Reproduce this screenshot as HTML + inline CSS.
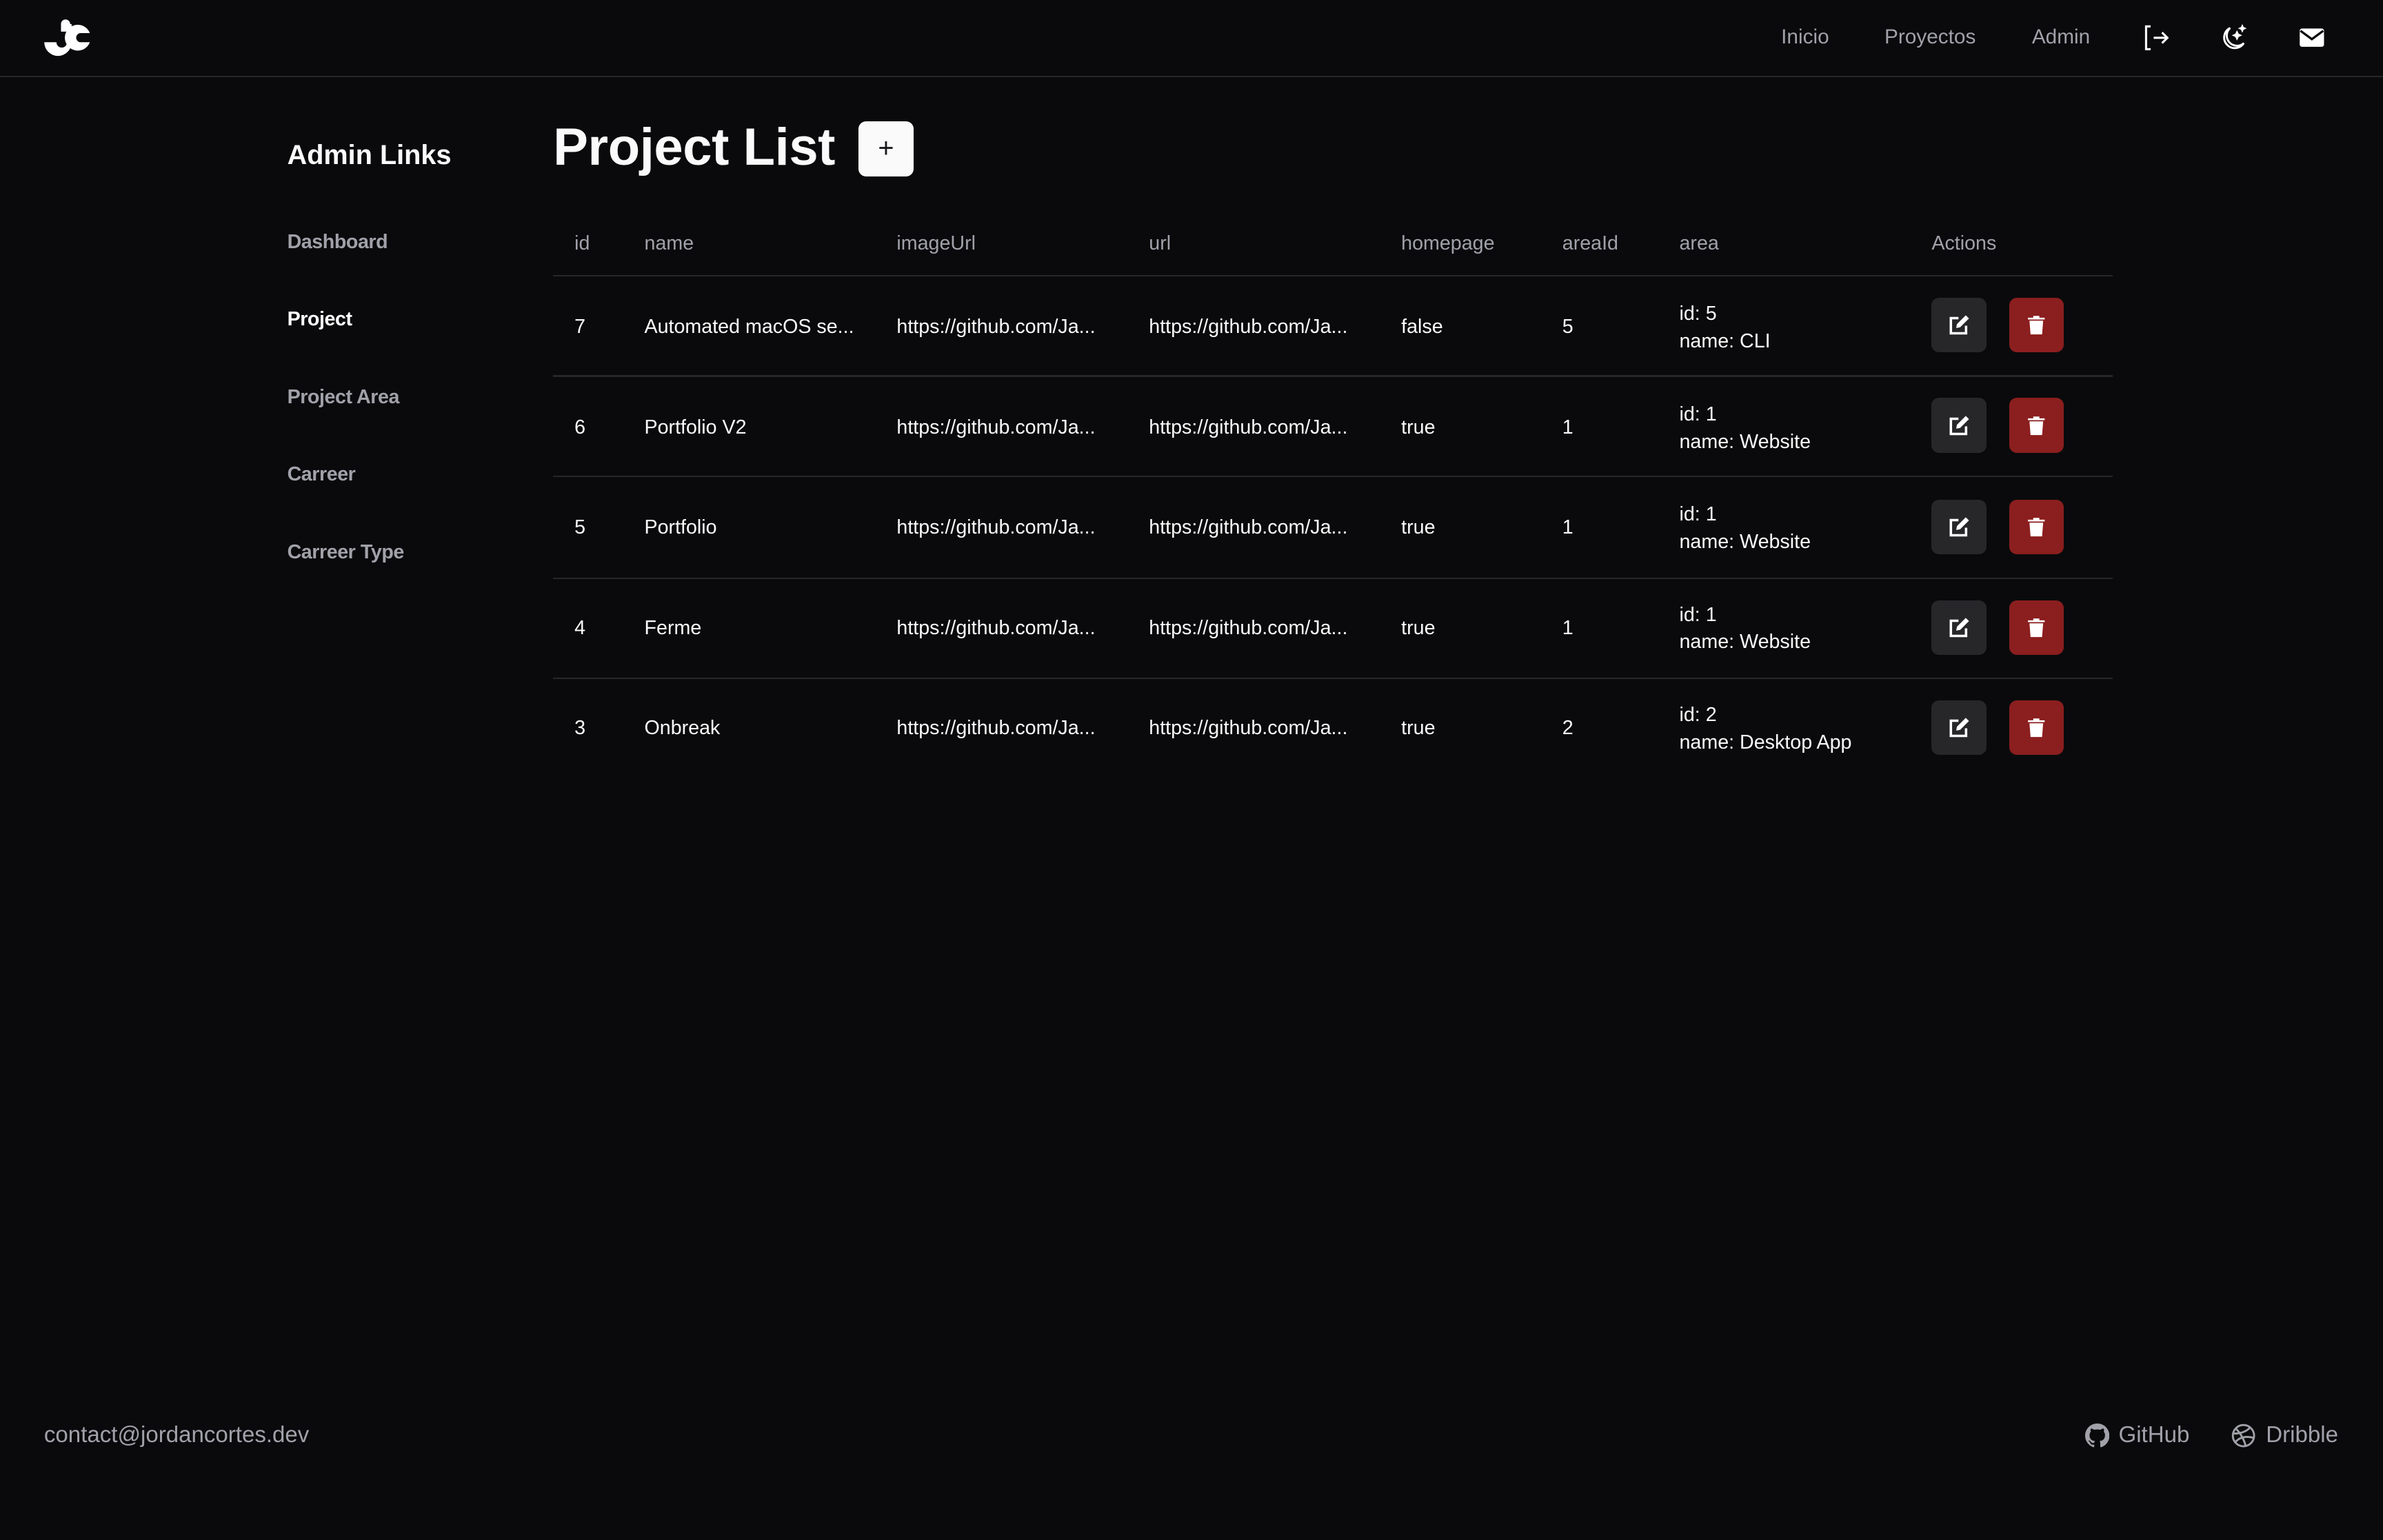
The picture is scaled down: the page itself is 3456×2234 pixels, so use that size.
<!DOCTYPE html>
<html><head><meta charset="utf-8"><style>
html{zoom:2.20408}
*{margin:0;padding:0;box-sizing:border-box}
body{width:1568px;height:1013.6px;background:#0a0a0c;font-family:"Liberation Sans",sans-serif;color:#fafafa;position:relative;overflow:hidden}
.a{position:absolute;white-space:nowrap}
.hdr{position:absolute;left:0;top:0;width:1568px;height:51px;border-bottom:1px solid #27272a}
.nav{font-size:13.5px;color:#a1a1aa;top:17px}
.side{font-size:13px;color:#a1a1aa;font-weight:bold;left:189px;letter-spacing:-0.2px}
.th{font-size:13px;color:#a1a1aa;top:153px}
.td{font-size:13px;color:#fafafa;margin-top:1px}
.line{position:absolute;left:364px;width:1026px;height:1px;background:#27272a}
.btn{position:absolute;width:36px;height:36px;border-radius:5px;display:flex;align-items:center;justify-content:center}
.ed{background:#27272a}.dl{background:#8b1e1e}
.foot{font-size:15px;color:#a1a1aa;top:936px}
</style></head><body>
<div class="hdr"></div>
<svg class="a" style="left:28px;top:12px" width="32" height="26" viewBox="0 0 32 26">
<circle cx="15" cy="4" r="3" fill="#fff"/>
<path d="M1 16 H9 A3.5 3.5 0 0 0 16 16 V9 H12 V4 H19 V16 A9 9 0 0 1 1 16Z" fill="#fff"/>
<path d="M31 10 A8.5 8.5 0 1 0 31 16 H25 A3 3 0 1 1 25 10Z" fill="#fff"/>
</svg>
<div class="a nav" style="left:1172px">Inicio</div>
<div class="a nav" style="left:1240px">Proyectos</div>
<div class="a nav" style="left:1337px">Admin</div>
<svg class="a" style="left:1410px;top:16px" width="18" height="18" viewBox="0 0 18 18" fill="none" stroke="#fff" stroke-width="1.4"><path d="M5 1.5H2V16.5H5"/><path d="M7 9H16M12.5 5.5L16 9L12.5 12.5"/></svg>
<svg class="a" style="left:1461px;top:16px" width="18" height="18" viewBox="0 0 18 18" fill="none" stroke="#fff" stroke-width="1.3"><path d="M6.5 2.5A7 7 0 1 0 15.5 12.5A6 6 0 0 1 6.5 2.5Z"/><path d="M11 5.5l.6 1.3 1.3.6-1.3.6L11 9.3l-.6-1.3-1.3-.6 1.3-.6Z" fill="#fff"/><path d="M14.5 1.5l.4.9.9.4-.9.4-.4.9-.4-.9-.9-.4.9-.4Z" fill="#fff"/></svg>
<svg class="a" style="left:1512px;top:17px" width="18" height="16" viewBox="0 0 18 16"><rect x="1" y="2" width="16" height="12" rx="1.5" fill="#fff"/><path d="M1.5 3.5L9 9L16.5 3.5" fill="none" stroke="#0a0a0c" stroke-width="1.5"/></svg>

<div class="a" style="left:189px;top:92px;font-size:18px;font-weight:bold">Admin Links</div>
<div class="a side" style="top:152px">Dashboard</div>
<div class="a side" style="top:203px;color:#fff">Project</div>
<div class="a side" style="top:254px">Project Area</div>
<div class="a side" style="top:305px">Carreer</div>
<div class="a side" style="top:356px">Carreer Type</div>

<div class="a" style="left:364px;top:77px;font-size:34.5px;font-weight:bold;letter-spacing:-0.2px">Project List</div>
<div class="btn" style="left:565px;top:80px;background:#fafafa;color:#18181b;font-size:18px;font-weight:300">+</div>

<div class="a th" style="left:378px">id</div>
<div class="a th" style="left:424px">name</div>
<div class="a th" style="left:590px">imageUrl</div>
<div class="a th" style="left:756px">url</div>
<div class="a th" style="left:922px">homepage</div>
<div class="a th" style="left:1028px">areaId</div>
<div class="a th" style="left:1105px">area</div>
<div class="a th" style="left:1271px">Actions</div>
<div class="line" style="top:181px"></div>
<div class="line" style="top:247px"></div>
<div class="line" style="top:313px"></div>
<div class="line" style="top:380px"></div>
<div class="line" style="top:446px"></div>

<div class="a td" style="left:378px;top:207px">7</div><div class="a td" style="left:424px;top:207px">Automated macOS se...</div><div class="a td" style="left:590px;top:207px">https://github.com/Ja...</div><div class="a td" style="left:756px;top:207px">https://github.com/Ja...</div><div class="a td" style="left:922px;top:207px">false</div><div class="a td" style="left:1028px;top:207px">5</div><div class="a td" style="left:1105px;top:197px;line-height:18px">id: 5<br>name: CLI</div>
<div class="a td" style="left:378px;top:273px">6</div><div class="a td" style="left:424px;top:273px">Portfolio V2</div><div class="a td" style="left:590px;top:273px">https://github.com/Ja...</div><div class="a td" style="left:756px;top:273px">https://github.com/Ja...</div><div class="a td" style="left:922px;top:273px">true</div><div class="a td" style="left:1028px;top:273px">1</div><div class="a td" style="left:1105px;top:263px;line-height:18px">id: 1<br>name: Website</div>
<div class="a td" style="left:378px;top:339px">5</div><div class="a td" style="left:424px;top:339px">Portfolio</div><div class="a td" style="left:590px;top:339px">https://github.com/Ja...</div><div class="a td" style="left:756px;top:339px">https://github.com/Ja...</div><div class="a td" style="left:922px;top:339px">true</div><div class="a td" style="left:1028px;top:339px">1</div><div class="a td" style="left:1105px;top:329px;line-height:18px">id: 1<br>name: Website</div>
<div class="a td" style="left:378px;top:405px">4</div><div class="a td" style="left:424px;top:405px">Ferme</div><div class="a td" style="left:590px;top:405px">https://github.com/Ja...</div><div class="a td" style="left:756px;top:405px">https://github.com/Ja...</div><div class="a td" style="left:922px;top:405px">true</div><div class="a td" style="left:1028px;top:405px">1</div><div class="a td" style="left:1105px;top:395px;line-height:18px">id: 1<br>name: Website</div>
<div class="a td" style="left:378px;top:471px">3</div><div class="a td" style="left:424px;top:471px">Onbreak</div><div class="a td" style="left:590px;top:471px">https://github.com/Ja...</div><div class="a td" style="left:756px;top:471px">https://github.com/Ja...</div><div class="a td" style="left:922px;top:471px">true</div><div class="a td" style="left:1028px;top:471px">2</div><div class="a td" style="left:1105px;top:461px;line-height:18px">id: 2<br>name: Desktop App</div>

<div class="btn ed" style="left:1271px;top:196px"><svg width="14" height="14" viewBox="0 0 14 14"><path d="M6.5 2.5H1.5V12.5H11.5V7.5" fill="none" stroke="#fff" stroke-width="1.6"/><path d="M11.3 0.6L13.4 2.7L7.6 8.5L5 9L5.5 6.4Z" fill="#fff"/></svg></div>
<div class="btn dl" style="left:1322px;top:196px"><svg width="12" height="14" viewBox="0 0 12 14"><path d="M0.5 2.2H11.5V3.4H0.5ZM4 1H8V2.2H4Z" fill="#fff"/><path d="M1.5 4.2H10.5L9.8 13.2H2.2Z" fill="#fff"/></svg></div>
<div class="btn ed" style="left:1271px;top:262px"><svg width="14" height="14" viewBox="0 0 14 14"><path d="M6.5 2.5H1.5V12.5H11.5V7.5" fill="none" stroke="#fff" stroke-width="1.6"/><path d="M11.3 0.6L13.4 2.7L7.6 8.5L5 9L5.5 6.4Z" fill="#fff"/></svg></div>
<div class="btn dl" style="left:1322px;top:262px"><svg width="12" height="14" viewBox="0 0 12 14"><path d="M0.5 2.2H11.5V3.4H0.5ZM4 1H8V2.2H4Z" fill="#fff"/><path d="M1.5 4.2H10.5L9.8 13.2H2.2Z" fill="#fff"/></svg></div>
<div class="btn ed" style="left:1271px;top:329px"><svg width="14" height="14" viewBox="0 0 14 14"><path d="M6.5 2.5H1.5V12.5H11.5V7.5" fill="none" stroke="#fff" stroke-width="1.6"/><path d="M11.3 0.6L13.4 2.7L7.6 8.5L5 9L5.5 6.4Z" fill="#fff"/></svg></div>
<div class="btn dl" style="left:1322px;top:329px"><svg width="12" height="14" viewBox="0 0 12 14"><path d="M0.5 2.2H11.5V3.4H0.5ZM4 1H8V2.2H4Z" fill="#fff"/><path d="M1.5 4.2H10.5L9.8 13.2H2.2Z" fill="#fff"/></svg></div>
<div class="btn ed" style="left:1271px;top:395px"><svg width="14" height="14" viewBox="0 0 14 14"><path d="M6.5 2.5H1.5V12.5H11.5V7.5" fill="none" stroke="#fff" stroke-width="1.6"/><path d="M11.3 0.6L13.4 2.7L7.6 8.5L5 9L5.5 6.4Z" fill="#fff"/></svg></div>
<div class="btn dl" style="left:1322px;top:395px"><svg width="12" height="14" viewBox="0 0 12 14"><path d="M0.5 2.2H11.5V3.4H0.5ZM4 1H8V2.2H4Z" fill="#fff"/><path d="M1.5 4.2H10.5L9.8 13.2H2.2Z" fill="#fff"/></svg></div>
<div class="btn ed" style="left:1271px;top:461px"><svg width="14" height="14" viewBox="0 0 14 14"><path d="M6.5 2.5H1.5V12.5H11.5V7.5" fill="none" stroke="#fff" stroke-width="1.6"/><path d="M11.3 0.6L13.4 2.7L7.6 8.5L5 9L5.5 6.4Z" fill="#fff"/></svg></div>
<div class="btn dl" style="left:1322px;top:461px"><svg width="12" height="14" viewBox="0 0 12 14"><path d="M0.5 2.2H11.5V3.4H0.5ZM4 1H8V2.2H4Z" fill="#fff"/><path d="M1.5 4.2H10.5L9.8 13.2H2.2Z" fill="#fff"/></svg></div>

<div class="a foot" style="left:29px">contact@jordancortes.dev</div>
<svg class="a" style="left:1372px;top:937px" width="16" height="16" viewBox="0 0 16 16"><path fill="#a1a1aa" d="M8 0C3.58 0 0 3.58 0 8c0 3.54 2.29 6.530 5.47 7.59.4.07.55-.17.55-.38v-1.33c-2.23.48-2.7-1.070-2.7-1.07-.36-.92-.89-1.17-.89-1.17-.73-.5.05-.49.05-.49.8.06 1.23.83 1.23.83.72 1.22 1.87.87 2.33.66.07-.52.28-.87.5-1.07-1.78-.2-3.64-.89-3.64-3.95 0-.87.31-1.59.82-2.15-.08-.2-.36-1.02.08-2.12 0 0 .67-.21 2.2.82a7.6 7.6 0 0 1 4 0c1.53-1.04 2.2-.82 2.2-.82.44 1.1.16 1.92.08 2.12.51.56.82 1.27.82 2.15 0 3.07-1.87 3.75-3.65 3.95.29.25.54.73.54 1.48v2.2c0 .21.15.46.55.38A8.01 8.01 0 0 0 16 8c0-4.42-3.580-8-8-8Z"/></svg>
<div class="a foot" style="left:1394px">GitHub</div>
<svg class="a" style="left:1468px;top:937px" width="16" height="16" viewBox="0 0 16 16" fill="none" stroke="#a1a1aa" stroke-width="1.3"><circle cx="8" cy="8" r="7"/><path d="M3 3.5C6 6 8.5 11 9.5 14.8M1.2 6.5C5 7 10 5.5 12.5 2.5M2.5 12.5C5 9 10 8 14.8 9.5"/></svg>
<div class="a foot" style="left:1491px">Dribble</div>
</body></html>
